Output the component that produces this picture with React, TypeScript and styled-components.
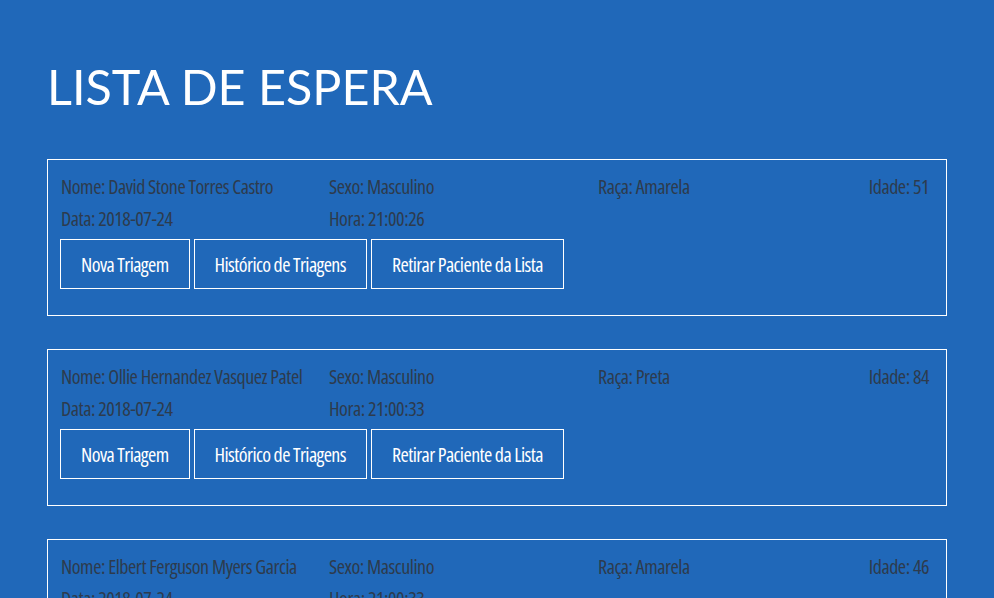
import React from "react";
import styled, { createGlobalStyle } from "styled-components";

const Global = createGlobalStyle`
  html, body { margin: 0; padding: 0; background: #2068b9; }
  body { font-family: "Open Sans", sans-serif; }
`;

const Page = styled.main`
  padding: 57px 47px 0 47px;
  min-height: 598px;
  box-sizing: border-box;
`;

const Title = styled.h1`
  margin: 0 0 44px 0;
  font-family: "Lato", sans-serif;
  font-weight: 400;
  font-size: 48.5px;
  line-height: 58px;
  color: #ffffff;
`;

const List = styled.div`
  display: flex;
  flex-direction: column;
  gap: 33px;
  width: 900px;
`;

const Card = styled.section`
  border: 1px solid #ffffff;
  padding: 10px 17px 26px 13px;
`;

const InfoRow = styled.div`
  display: grid;
  grid-template-columns: 268px 269px 269px 1fr;
  height: 32px;
  align-items: center;
`;

const Field = styled.span<{ $right?: boolean }>`
  font-family: "Open Sans", sans-serif;
  font-stretch: 75%;
  font-weight: 450;
  font-size: 20px;
  color: #2d3b4d;
  letter-spacing: -0.46px;
  text-align: ${(p) => (p.$right ? "right" : "left")};
  white-space: nowrap;
`;

const Actions = styled.div`
  display: flex;
  gap: 4px;
  margin: 5px 0 0 -1px;
`;

const Button = styled.button`
  height: 50px;
  padding: 0 20px;
  background: transparent;
  border: 1px solid #ffffff;
  color: #ffffff;
  font-family: "Open Sans", sans-serif;
  font-stretch: 75%;
  font-weight: 450;
  font-size: 20px;
  letter-spacing: -0.58px;
  cursor: pointer;
`;

type Patient = {
  nome: string;
  sexo: string;
  raca: string;
  idade: number;
  data: string;
  hora: string;
};

const patients: Patient[] = [
  { nome: "David Stone Torres Castro", sexo: "Masculino", raca: "Amarela", idade: 51, data: "2018-07-24", hora: "21:00:26" },
  { nome: "Ollie Hernandez Vasquez Patel", sexo: "Masculino", raca: "Preta", idade: 84, data: "2018-07-24", hora: "21:00:33" },
  { nome: "Elbert Ferguson Myers Garcia", sexo: "Masculino", raca: "Amarela", idade: 46, data: "2018-07-24", hora: "21:00:33" },
];

export default function App() {
  return (
    <>
      <Global />
      <Page>
        <Title>LISTA DE ESPERA</Title>
        <List>
          {patients.map((p) => (
            <Card key={p.nome}>
              <InfoRow>
                <Field>Nome: {p.nome}</Field>
                <Field>Sexo: {p.sexo}</Field>
                <Field>Raça: {p.raca}</Field>
                <Field $right>Idade: {p.idade}</Field>
              </InfoRow>
              <InfoRow>
                <Field>Data: {p.data}</Field>
                <Field>Hora: {p.hora}</Field>
              </InfoRow>
              <Actions>
                <Button>Nova Triagem</Button>
                <Button>Histórico de Triagens</Button>
                <Button>Retirar Paciente da Lista</Button>
              </Actions>
            </Card>
          ))}
        </List>
      </Page>
    </>
  );
}
